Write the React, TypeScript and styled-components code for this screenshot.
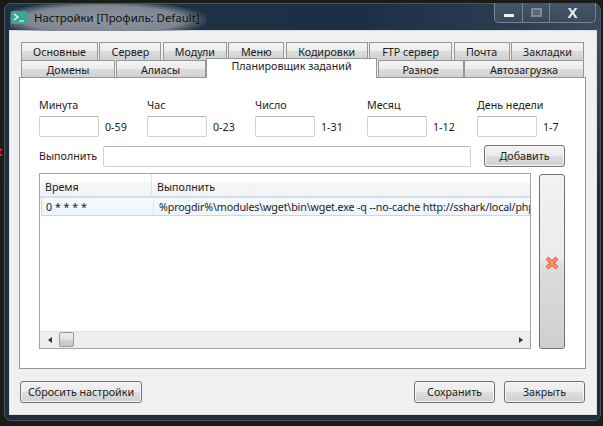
import React from "react";
import styled, { createGlobalStyle } from "styled-components";

const GlobalStyle = createGlobalStyle`
  html, body {
    margin: 0;
    padding: 0;
    background: #1b1b18;
  }
  body {
    font-family: "Noto Sans", "DejaVu Sans", sans-serif;
    font-size: 10.7px;
    color: #1c1c1c;
    overflow: hidden;
  }
`;

const Desktop = styled.div`
  position: relative;
  width: 603px;
  height: 426px;
  padding: 3px 2px 5px 4px;
  box-sizing: border-box;
  overflow: hidden;
  background: #1b1b18;
`;

const DesktopGlyph = styled.span<{ $top: number; $color: string }>`
  position: absolute;
  left: -3px;
  top: ${({ $top }) => $top}px;
  font-size: 13px;
  font-weight: 700;
  color: ${({ $color }) => $color};
`;

const Window = styled.div`
  height: 100%;
  display: flex;
  flex-direction: column;
  box-sizing: border-box;
  border: 1px solid #4a5560;
  border-radius: 7px;
  padding: 0 4px 6px 5px;
  background:
    linear-gradient(rgba(30, 46, 62, 0) 0%, rgba(30, 46, 62, 0) 10%, #1e2e3e 45%),
    linear-gradient(90deg, #1e3044 0%, #1c3045 60%, #2a3c50 85%, #3c4c5e 100%);
`;

const TitleBar = styled.div`
  height: 27px;
  flex: none;
  display: flex;
  align-items: flex-start;
  position: relative;
`;

const TitleGlow = styled.div`
  display: flex;
  align-items: center;
  gap: 7px;
  width: 196px;
  height: 27px;
  padding-left: 1px;
  background: radial-gradient(ellipse 55% 72% at 47% 58%, #8b939b 0%, #7f8891 72%, rgba(30, 48, 68, 0) 100%);
`;

const AppIcon = styled.svg`
  width: 16px;
  height: 13px;
  flex: none;
`;

const TitleText = styled.span`
  font-size: 11.4px;
  color: #111;
  white-space: nowrap;
`;

const WindowControls = styled.div`
  position: absolute;
  top: -1px;
  right: 0;
  display: flex;
  height: 19px;
  border: 1px solid #76848f;
  border-top: none;
  border-radius: 0 0 5px 5px;
  background: linear-gradient(#46566a, #3a4a5a);
`;

const ControlButton = styled.div<{ $width: number }>`
  width: ${({ $width }) => $width}px;
  display: flex;
  align-items: center;
  justify-content: center;
  border-left: 1px solid #76848f;
  &:first-child {
    border-left: none;
  }
`;

const MinimizeGlyph = styled.div`
  width: 10px;
  height: 3px;
  margin-top: 5px;
  background: #f0f0f0;
`;

const MaximizeGlyph = styled.div`
  width: 11px;
  height: 9px;
  box-sizing: border-box;
  border: 2px solid #7f8b96;
  background: #5a6672;
`;

const CloseGlyph = styled.span`
  font-family: "Liberation Sans", sans-serif;
  font-size: 15px;
  font-weight: 700;
  line-height: 1;
  color: #eef0f2;
`;

const Client = styled.div`
  flex: 1;
  display: flex;
  flex-direction: column;
  box-sizing: border-box;
  padding: 11px 10px 11px 9px;
  background: #f0f0f0;
  box-shadow: 0 0 0 1px #d8dde2;
`;

const Tabs = styled.div`
  display: flex;
  flex-direction: column;
  padding: 0 2px;
`;

const TabRow = styled.div`
  display: flex;
  justify-content: space-between;
  height: 18px;
  position: relative;
`;

const Tab = styled.div<{ $width: number; $active?: boolean }>`
  width: ${({ $width }) => $width}px;
  box-sizing: border-box;
  display: flex;
  align-items: center;
  justify-content: center;
  white-space: nowrap;
  border: 1px solid #969696;
  border-bottom: none;
  background: ${({ $active }) =>
    $active ? "#fff" : "linear-gradient(#f4f4f4 0%, #ececec 45%, #dcdcdc 50%, #cfcfcf 100%)"};
  height: ${({ $active }) => ($active ? "20px" : "18px")};
  margin-top: ${({ $active }) => ($active ? "-2px" : "0")};
  padding-bottom: ${({ $active }) => ($active ? "5px" : "0")};
  z-index: ${({ $active }) => ($active ? 2 : 0)};
`;

const Pane = styled.div`
  flex: 1;
  display: flex;
  flex-direction: column;
  box-sizing: border-box;
  padding: 21px 20px 19px 19px;
  background: #fff;
  border: 1px solid #969696;
  margin-top: -1px;
  position: relative;
  z-index: 1;
`;

const FieldGrid = styled.div`
  display: grid;
  grid-template-columns: 108px 108px 112px 110px auto;
`;

const Field = styled.div`
  display: flex;
  flex-direction: column;
  gap: 4px;
`;

const FieldLabel = styled.label`
  height: 13px;
  line-height: 13px;
  white-space: nowrap;
`;

const FieldBody = styled.div`
  display: flex;
  align-items: center;
  gap: 6px;
`;

const TextInput = styled.div<{ $width?: number }>`
  box-sizing: border-box;
  height: 21px;
  width: ${({ $width }) => ($width ? `${$width}px` : "auto")};
  flex: ${({ $width }) => ($width ? "none" : "1")};
  background: #fff;
  border: 1px solid #d2d2d2;
  border-top-color: #b4b4b4;
  border-radius: 2px;
`;

const RangeHint = styled.span`
  white-space: nowrap;
`;

const CommandRow = styled.div`
  display: flex;
  align-items: center;
  margin-top: 8px;
`;

const CommandLabel = styled.label`
  width: 64px;
  flex: none;
`;

const Button = styled.button<{ $width: number }>`
  width: ${({ $width }) => $width}px;
  height: 22px;
  flex: none;
  padding: 0;
  box-sizing: border-box;
  font: inherit;
  color: #1c1c1c;
  border: 1px solid #707070;
  border-radius: 3px;
  background: linear-gradient(#f2f2f2 0%, #ebebeb 48%, #dddddd 52%, #cfcfcf 100%);
  box-shadow: inset 0 0 0 1px #f8f8f8;
`;

const AddButton = styled(Button)`
  margin-left: 13px;
`;

const TableRow = styled.div`
  flex: 1;
  display: flex;
  gap: 8px;
  margin-top: 6px;
  min-height: 0;
`;

const Table = styled.div`
  flex: 1;
  display: flex;
  flex-direction: column;
  box-sizing: border-box;
  border: 1px solid #a4a4a4;
  min-width: 0;
`;

const TableHeader = styled.div`
  height: 24px;
  flex: none;
  display: grid;
  grid-template-columns: 111px 1fr;
  background: linear-gradient(#fff 0%, #fff 30%, #f4f5f7 45%, #f2f3f5 100%);
  border-bottom: 2px solid #d6e0ec;
  box-sizing: border-box;
`;

const HeaderCell = styled.div`
  display: flex;
  align-items: center;
  padding-left: 5px;
  padding-top: 3px;
  border-left: 1px solid #dfe3e8;
  &:first-child {
    border-left: none;
  }
`;

const DataRow = styled.div`
  height: 18px;
  flex: none;
  display: grid;
  grid-template-columns: 111px 1fr;
  box-sizing: border-box;
  border: 1px solid #c5d7ee;
  border-top: none;
  border-right: none;
  margin-left: 1px;
  border-radius: 0 0 0 2px;
  background: linear-gradient(#f6fafe, #eef5fd);
  overflow: hidden;
`;

const DataCell = styled.div`
  display: flex;
  align-items: center;
  padding-left: 4px;
  white-space: nowrap;
  overflow: hidden;
  & + & {
    border-left: 1px solid #dfe8f2;
    padding-left: 5px;
    letter-spacing: -0.15px;
  }
`;

const TableSpace = styled.div`
  flex: 1;
`;

const ScrollBar = styled.div`
  height: 17px;
  flex: none;
  display: flex;
  align-items: center;
  justify-content: space-between;
  padding: 0 7px 0 8px;
  background: #ededed;
  box-shadow: inset 0 1px 0 #e2e2e2;
`;

const ScrollLeft = styled.div`
  display: flex;
  align-items: center;
  gap: 7px;
`;

const ScrollArrow = styled.div<{ $direction: "left" | "right" }>`
  width: 0;
  height: 0;
  border-top: 3px solid transparent;
  border-bottom: 3px solid transparent;
  ${({ $direction }) =>
    $direction === "left" ? "border-right: 4px solid #333;" : "border-left: 4px solid #333;"}
`;

const ScrollThumb = styled.div`
  width: 15px;
  height: 15px;
  box-sizing: border-box;
  border: 1px solid #9a9a9a;
  border-radius: 2px;
  background: linear-gradient(#ececec 0%, #e4e4e4 48%, #d4d4d4 52%, #c6c6c6 100%);
`;

const DeleteButton = styled.button`
  width: 26px;
  flex: none;
  margin: 1px 0 0;
  height: 175px;
  padding: 2px 0 0;
  display: flex;
  align-items: center;
  justify-content: center;
  box-sizing: border-box;
  border: 1px solid #707070;
  border-radius: 3px;
  background: linear-gradient(#f2f2f2 0%, #ebebeb 48%, #dddddd 52%, #cfcfcf 100%);
`;

const DeleteIcon = styled.svg`
  width: 16px;
  height: 16px;
`;

const Footer = styled.div`
  display: flex;
  align-items: center;
  margin-top: 12px;
  padding: 0 1px;
  gap: 9px;
`;

const FooterSpacer = styled.div`
  flex: 1;
`;

const fields = [
  { label: "Минута", hint: "0-59" },
  { label: "Час", hint: "0-23" },
  { label: "Число", hint: "1-31" },
  { label: "Месяц", hint: "1-12" },
  { label: "День недели", hint: "1-7" },
];

const topTabs = [
  { title: "Основные", width: 77 },
  { title: "Сервер", width: 62 },
  { title: "Модули", width: 64 },
  { title: "Меню", width: 56 },
  { title: "Кодировки", width: 82 },
  { title: "FTP сервер", width: 83 },
  { title: "Почта", width: 56 },
  { title: "Закладки", width: 73 },
];

const bottomTabs = [
  { title: "Домены", width: 94 },
  { title: "Алиасы", width: 90 },
  { title: "Планировщик заданий", width: 171, active: true },
  { title: "Разное", width: 86 },
  { title: "Автозагрузка", width: 120 },
];

export default function App() {
  return (
    <Desktop>
      <GlobalStyle />
      <DesktopGlyph $top={142} $color="#d81e4a">t</DesktopGlyph>
      <Window>
        <TitleBar>
          <TitleGlow>
            <AppIcon viewBox="0 0 16 13">
              <rect width="16" height="13" rx="2" fill="#3aa598" />
              <path d="M3 3 L7 6 L3 9" fill="none" stroke="#e8f8f4" strokeWidth="1.4" />
              <path d="M8 10 H13" stroke="#bfe8e0" strokeWidth="1.4" />
            </AppIcon>
            <TitleText>Настройки [Профиль: Default]</TitleText>
          </TitleGlow>
          <WindowControls>
            <ControlButton $width={27}>
              <MinimizeGlyph />
            </ControlButton>
            <ControlButton $width={26}>
              <MaximizeGlyph />
            </ControlButton>
            <ControlButton $width={45}>
              <CloseGlyph>X</CloseGlyph>
            </ControlButton>
          </WindowControls>
        </TitleBar>
        <Client>
          <Tabs>
            <TabRow>
              {topTabs.map((tab) => (
                <Tab key={tab.title} $width={tab.width}>
                  {tab.title}
                </Tab>
              ))}
            </TabRow>
            <TabRow>
              {bottomTabs.map((tab) => (
                <Tab key={tab.title} $width={tab.width} $active={tab.active}>
                  {tab.title}
                </Tab>
              ))}
            </TabRow>
          </Tabs>
          <Pane>
            <FieldGrid>
              {fields.map((field) => (
                <Field key={field.label}>
                  <FieldLabel>{field.label}</FieldLabel>
                  <FieldBody>
                    <TextInput $width={60} />
                    <RangeHint>{field.hint}</RangeHint>
                  </FieldBody>
                </Field>
              ))}
            </FieldGrid>
            <CommandRow>
              <CommandLabel>Выполнить</CommandLabel>
              <TextInput />
              <AddButton $width={81}>Добавить</AddButton>
            </CommandRow>
            <TableRow>
              <Table>
                <TableHeader>
                  <HeaderCell>Время</HeaderCell>
                  <HeaderCell>Выполнить</HeaderCell>
                </TableHeader>
                <DataRow>
                  <DataCell>0 * * * *</DataCell>
                  <DataCell>%progdir%\modules\wget\bin\wget.exe -q --no-cache http://sshark/local/php</DataCell>
                </DataRow>
                <TableSpace />
                <ScrollBar>
                  <ScrollLeft>
                    <ScrollArrow $direction="left" />
                    <ScrollThumb />
                  </ScrollLeft>
                  <ScrollArrow $direction="right" />
                </ScrollBar>
              </Table>
              <DeleteButton aria-label="Удалить">
                <DeleteIcon viewBox="0 0 16 16">
                  <path d="M3 3 L13 13 M13 3 L3 13" stroke="#d9694f" strokeWidth="4" />
                  <path d="M3 3 L13 13 M13 3 L3 13" stroke="#fb8a6c" strokeWidth="2.4" />
                </DeleteIcon>
              </DeleteButton>
            </TableRow>
          </Pane>
          <Footer>
            <Button $width={122}>Сбросить настройки</Button>
            <FooterSpacer />
            <Button $width={81}>Сохранить</Button>
            <Button $width={81}>Закрыть</Button>
          </Footer>
        </Client>
      </Window>
    </Desktop>
  );
}
